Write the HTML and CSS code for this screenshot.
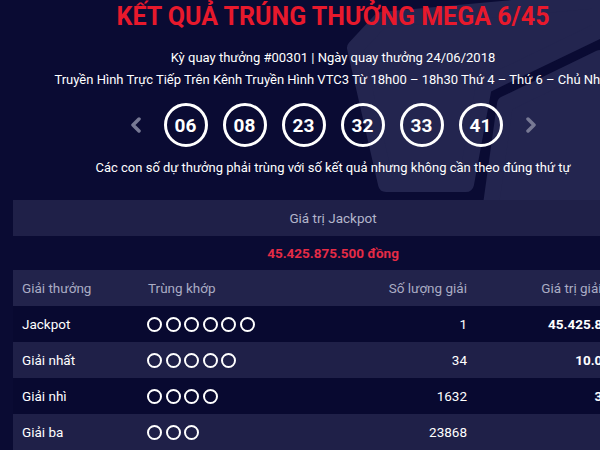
FILE: index.html
```html
<!DOCTYPE html>
<html lang="vi">
<head>
<meta charset="utf-8">
<title>Kết quả Mega 6/45</title>
<link rel="stylesheet" href="styles.css">
</head>
<body>
<svg class="bg-deco" width="600" height="450" viewBox="0 0 600 450" aria-hidden="true">
  <path class="deco" d="M381,20 L600,0 L600,30 L484,86 L466,184 L386,184 L355,48 Z"/>
  <path class="deco" d="M505,104 L600,58 L600,212 L490,212 Z"/>
</svg>
<main class="result">
  <h1 class="title">KẾT QUẢ TRÚNG THƯỞNG MEGA 6/45</h1>
  <p class="meta">Kỳ quay thưởng #00301 | Ngày quay thưởng 24/06/2018</p>
  <p class="meta">Truyền Hình Trực Tiếp Trên Kênh Truyền Hình VTC3 Từ 18h00 – 18h30 Thứ 4 – Thứ 6 – Chủ Nhật</p>
  <div class="balls">
    <span class="nav">
      <svg width="14" height="16" viewBox="0 0 14 16"><path d="M10,2 L4,8 L10,14"/></svg>
    </span>
    <span class="ball">06</span>
    <span class="ball">08</span>
    <span class="ball">23</span>
    <span class="ball">32</span>
    <span class="ball">33</span>
    <span class="ball">41</span>
    <span class="nav">
      <svg width="14" height="16" viewBox="0 0 14 16"><path d="M4,2 L10,8 L4,14"/></svg>
    </span>
  </div>
  <p class="note">Các con số dự thưởng phải trùng với số kết quả nhưng không cần theo đúng thứ tự</p>
  <div class="jackpot-label">Giá trị Jackpot</div>
  <div class="jackpot-value">45.425.875.500 đồng</div>
  <table class="prizes">
    <colgroup>
      <col class="c1"><col class="c2"><col class="c3"><col class="c4">
    </colgroup>
    <thead>
      <tr>
        <th class="left">Giải thưởng</th>
        <th class="left">Trùng khớp</th>
        <th class="right">Số lượng giải</th>
        <th class="right">Giá trị giải (đồng)</th>
      </tr>
    </thead>
    <tbody>
      <tr class="dark">
        <td>Jackpot</td>
        <td><span class="dots"><i></i><i></i><i></i><i></i><i></i><i></i></span></td>
        <td class="right">1</td>
        <td class="right strong">45.425.875.500</td>
      </tr>
      <tr class="light">
        <td>Giải nhất</td>
        <td><span class="dots"><i></i><i></i><i></i><i></i><i></i></span></td>
        <td class="right">34</td>
        <td class="right strong">10.000.000</td>
      </tr>
      <tr class="dark">
        <td>Giải nhì</td>
        <td><span class="dots"><i></i><i></i><i></i><i></i></span></td>
        <td class="right">1632</td>
        <td class="right strong">300.000</td>
      </tr>
      <tr class="light">
        <td>Giải ba</td>
        <td><span class="dots"><i></i><i></i><i></i></span></td>
        <td class="right">23868</td>
        <td class="right strong">30.000</td>
      </tr>
    </tbody>
  </table>
</main>
</body>
</html>
```

FILE: styles.css
```css
html, body {
  margin: 0;
  padding: 0;
}

body {
  width: 600px;
  height: 450px;
  overflow: hidden;
  position: relative;
  background: #0a0b33;
  font-family: Roboto, "Liberation Sans", "Noto Sans", sans-serif;
  color: #ffffff;
}

.bg-deco {
  position: absolute;
  left: 0;
  top: 0;
  z-index: 0;
}

.deco {
  fill: #23254f;
  stroke: #23254f;
  stroke-width: 16;
  stroke-linejoin: round;
}

.result {
  position: relative;
  z-index: 1;
  width: 640px;
  margin-left: 13px;
  padding-top: 2px;
  display: flex;
  flex-direction: column;
  align-items: center;
}

.title {
  margin: 0;
  font-size: 25px;
  line-height: 30px;
  font-weight: 700;
  color: #e8192c;
  white-space: nowrap;
}

.meta {
  margin: 0;
  font-size: 13px;
  line-height: 20px;
  white-space: nowrap;
}

.title + .meta {
  margin-top: 16px;
}

.meta + .meta {
  margin-top: 2px;
}

.balls {
  margin-top: 13px;
  display: flex;
  align-items: center;
  gap: 15px;
}

.nav {
  width: 20px;
  height: 44px;
  display: flex;
  align-items: center;
  justify-content: center;
}

.nav svg path {
  fill: none;
  stroke: #777994;
  stroke-width: 3.5;
  stroke-linecap: round;
  stroke-linejoin: round;
}

.balls .nav:first-child {
  margin-right: 3px;
}

.balls .nav:last-child {
  margin-left: 3px;
}

.ball {
  box-sizing: border-box;
  width: 44px;
  height: 44px;
  border: 3px solid #ffffff;
  border-radius: 50%;
  display: flex;
  align-items: center;
  justify-content: center;
  font-size: 19px;
  font-weight: 700;
}

.note {
  margin: 11px 0 0;
  font-size: 13px;
  line-height: 20px;
  white-space: nowrap;
}

.jackpot-label {
  align-self: stretch;
  margin-top: 22px;
  height: 36px;
  line-height: 36px;
  text-align: center;
  background: #1f2048;
  color: #b3b5cb;
  font-size: 13.5px;
}

.jackpot-value {
  height: 34px;
  line-height: 34px;
  color: #e52b46;
  font-size: 13.5px;
  font-weight: 700;
}

.prizes {
  align-self: stretch;
  width: 640px;
  border-collapse: collapse;
  table-layout: fixed;
  font-size: 13.5px;
}

.c1 { width: 126px; }
.c2 { width: 186px; }
.c3 { width: 150px; }
.c4 { width: 178px; }

.prizes th,
.prizes td {
  height: 36px;
  padding: 0 9px;
  box-sizing: border-box;
  white-space: nowrap;
  overflow: hidden;
  vertical-align: middle;
}

.prizes th {
  font-weight: 400;
  color: #aaacc4;
  background: #22234b;
}

.prizes .left { text-align: left; }
.prizes .right { text-align: right; padding-right: 8px; }
.prizes .strong { font-weight: 700; }

.prizes tr.dark td { background: #080930; }
.prizes tr.light td { background: #1f2048; }

.dots {
  display: flex;
  gap: 3.5px;
  margin-left: -1px;
}

.dots i {
  box-sizing: border-box;
  width: 15px;
  height: 15px;
  border: 2px solid #ffffff;
  border-radius: 50%;
}
```
